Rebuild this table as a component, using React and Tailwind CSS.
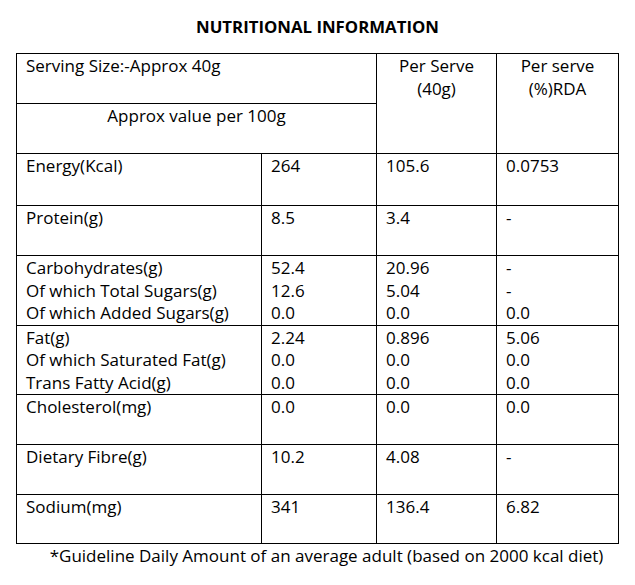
import React from "react";

const rows = [
  { h: "h-[52px]", a: ["Energy(Kcal)"], b: ["264"], c: ["105.6"], d: ["0.0753"] },
  { h: "h-[50px]", a: ["Protein(g)"], b: ["8.5"], c: ["3.4"], d: ["-"] },
  {
    h: "h-[69px]",
    a: ["Carbohydrates(g)", "Of which Total Sugars(g)", "Of which Added Sugars(g)"],
    b: ["52.4", "12.6", "0.0"],
    c: ["20.96", "5.04", "0.0"],
    d: ["-", "-", "0.0"],
  },
  {
    h: "h-[69px]",
    a: ["Fat(g)", "Of which Saturated Fat(g)", "Trans Fatty Acid(g)"],
    b: ["2.24", "0.0", "0.0"],
    c: ["0.896", "0.0", "0.0"],
    d: ["5.06", "0.0", "0.0"],
  },
  { h: "h-[50px]", a: ["Cholesterol(mg)"], b: ["0.0"], c: ["0.0"], d: ["0.0"] },
  { h: "h-[50px]", a: ["Dietary Fibre(g)"], b: ["10.2"], c: ["4.08"], d: ["-"] },
  { h: "h-[49px]", a: ["Sodium(mg)"], b: ["341"], c: ["136.4"], d: ["6.82"] },
];

function Cell({ lines, h }) {
  return (
    <td className={`border border-black align-top pl-[9px] pr-1 pt-[1px] ${h}`}>
      {lines.map((l, i) => (
        <div key={i} className="leading-[22.5px] whitespace-nowrap">
          {l}
        </div>
      ))}
    </td>
  );
}

export default function App() {
  return (
    <div
      className="w-[635px] h-[585px] bg-white text-black"
      style={{ fontFamily: '"Open Sans", "Liberation Sans", sans-serif' }}
    >
      <div className="h-[53px] pt-[15px] text-center font-bold text-[16.8px] leading-[24px]">
        NUTRITIONAL INFORMATION
      </div>
      <table className="ml-[16px] border-collapse table-fixed w-[602px] text-[17px]">
        <colgroup>
          <col className="w-[245px]" />
          <col className="w-[115px]" />
          <col className="w-[120px]" />
          <col className="w-[122px]" />
        </colgroup>
        <tbody>
          <tr className="h-[50px]">
            <td colSpan={2} className="border border-black align-top pl-[9px] pt-[1px] leading-[22.5px]">
              Serving Size:-Approx 40g
            </td>
            <td rowSpan={2} className="border border-black align-top text-center pt-[1px] leading-[22.5px]">
              <div>Per Serve</div>
              <div>(40g)</div>
            </td>
            <td rowSpan={2} className="border border-black align-top text-center pt-[1px] leading-[22.5px]">
              <div>Per serve</div>
              <div>(%)RDA</div>
            </td>
          </tr>
          <tr className="h-[50px]">
            <td colSpan={2} className="border border-black align-top text-center pt-[1px] leading-[22.5px]">
              Approx value per 100g
            </td>
          </tr>
          {rows.map((r, i) => (
            <tr key={i}>
              <Cell lines={r.a} h={r.h} />
              <Cell lines={r.b} h={r.h} />
              <Cell lines={r.c} h={r.h} />
              <Cell lines={r.d} h={r.h} />
            </tr>
          ))}
        </tbody>
      </table>
      <div className="pl-[18px] pt-[1px] text-center text-[17px] leading-[22px] whitespace-nowrap">
        *Guideline Daily Amount of an average adult (based on 2000 kcal diet)
      </div>
    </div>
  );
}
